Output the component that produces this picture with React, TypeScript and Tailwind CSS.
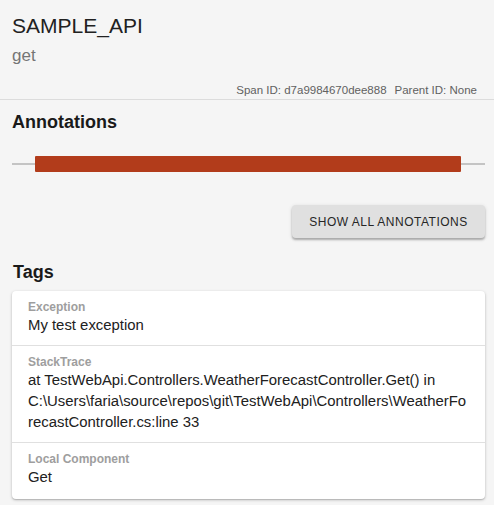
import React from "react";

const rows = [
  { label: "Exception", value: "My test exception" },
  {
    label: "StackTrace",
    value:
      "at TestWebApi.Controllers.WeatherForecastController.Get() in C:\\Users\\faria\\source\\repos\\git\\TestWebApi\\Controllers\\WeatherForecastController.cs:line 33",
  },
  { label: "Local Component", value: "Get" },
];

export default function App() {
  return (
    <div
      className="w-[494px] h-[505px] bg-[#f5f5f5] text-[#212121] overflow-hidden"
      style={{ fontFamily: '"Liberation Sans", Arial, sans-serif' }}
    >
      <div className="pl-3 pr-[9px] pt-[12px]">
        <div className="text-[21px] leading-[28px] text-[#212121]">SAMPLE_API</div>
        <div className="text-[17px] leading-[22px] text-[#757575] mt-[5px]">get</div>
        <div className="flex justify-end gap-[8px] pr-[8px] mt-[16px] text-[11.5px] leading-[14px] text-[#616161]">
          <span>Span ID: d7a9984670dee888</span>
          <span>Parent ID: None</span>
        </div>
      </div>
      <div className="mt-[2px] h-px bg-[#dcdcdc]" />
      <div className="pl-3 pr-[9px]">
        <div className="mt-[11px] text-[18px] leading-[22px] font-bold text-[#1a1a1a]">Annotations</div>
        <div className="relative mt-[23px] h-[16px]">
          <div className="absolute left-0 right-0 top-[7px] h-[2px] bg-[#c4c4c4]" />
          <div className="absolute left-[23px] w-[426px] top-0 h-[16px] bg-[#b23c1b] rounded-[1px]" />
        </div>
        <div className="flex justify-end mt-[33px]">
          <button className="w-[193px] h-[33px] bg-[#e0e0e0] rounded-[4px] text-[12px] tracking-[0.5px] text-[#262626] shadow-[0_2px_2px_rgba(0,0,0,0.25),0_1px_4px_rgba(0,0,0,0.12)]">
            SHOW ALL ANNOTATIONS
          </button>
        </div>
        <div className="mt-[23px] text-[18px] leading-[22px] font-bold text-[#1a1a1a] ml-px">Tags</div>
        <div className="mt-[8px] bg-white rounded-[4px] shadow-[0_1px_3px_rgba(0,0,0,0.25),0_1px_1px_rgba(0,0,0,0.1)]">
          {rows.map((r, i) => (
            <div
              key={r.label}
              className={`px-4 pt-[8px] ${i === 2 ? "pb-[11px]" : "pb-[9px]"} ${i > 0 ? "border-t border-[#e0e0e0]" : ""}`}
            >
              <div className="text-[12px] leading-[16px] font-bold text-[#9e9e9e]">{r.label}</div>
              <div className="text-[14.9px] leading-[21px] text-[#212121] [overflow-wrap:anywhere]">{r.value}</div>
            </div>
          ))}
        </div>
      </div>
    </div>
  );
}
